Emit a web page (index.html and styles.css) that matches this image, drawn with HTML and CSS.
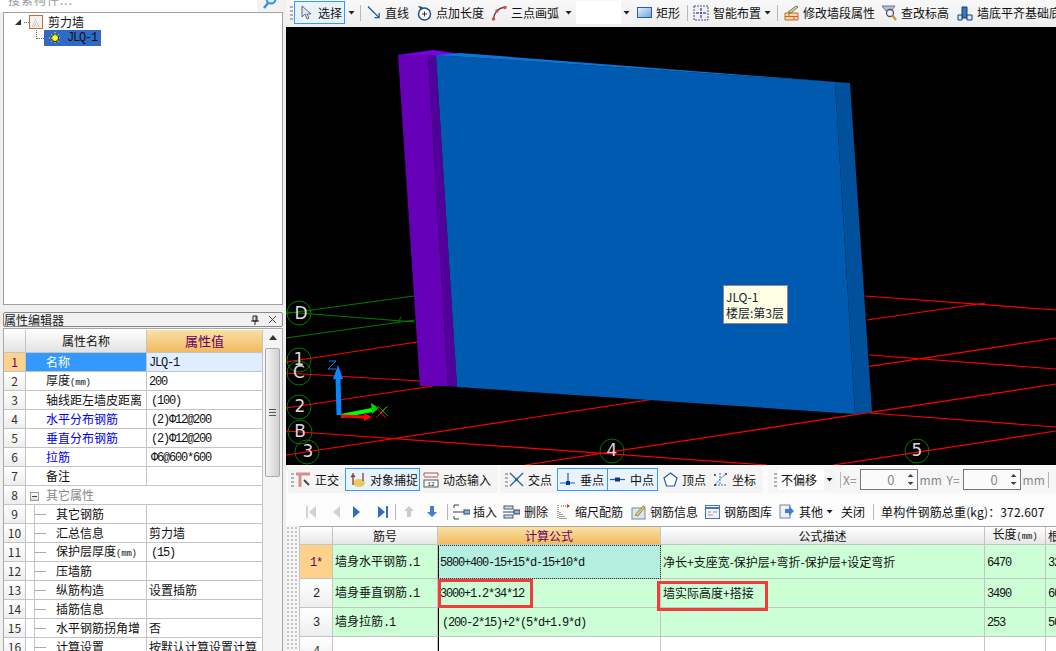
FILE: index.html
```html
<!DOCTYPE html>
<html lang="zh">
<head>
<meta charset="utf-8">
<title>剪力墙</title>
<link rel="stylesheet" href="styles.css">
</head>
<body>
<div class="app">
  <aside class="left">
    <div class="search">
      <div class="search-input">搜索构件...</div>
      <div class="search-btn"><svg width="14" height="12" viewBox="0 0 14 12"><circle cx="8" cy="-1" r="4.5" fill="#dbeeff" stroke="#3d8fd8" stroke-width="2"/><path d="M5 3 1 8" stroke="#3d8fd8" stroke-width="2.5"/></svg></div>
    </div>
    <div class="tree">
      <div class="tree-root">
        <svg class="expander" width="6" height="6" viewBox="0 0 6 6"><path d="M6 0V6H0Z" fill="#333"/></svg>
        <span class="dots-h"></span>
        <svg width="14" height="14" viewBox="0 0 14 14"><rect x=".5" y=".5" width="13" height="13" fill="#f7f0ea" stroke="#b8703c"/><path d="M3 11h8M4 9h6M5 7h4M6 5h2" stroke="#aaa" stroke-dasharray="1 1"/></svg>
        <span class="tree-label">剪力墙</span>
      </div>
      <div class="tree-child">
        <span class="dots-l"></span>
        <div class="tree-sel">
          <svg width="12" height="12" viewBox="0 0 12 12"><circle cx="6" cy="6" r="3.5" fill="#ffff20" stroke="#111"/><path d="M6 0v12M0 6h12M2 2l8 8M10 2l-8 8" stroke="#ffff20" stroke-dasharray="1 1"/></svg>
          <span class="m">JLQ-1</span>
        </div>
      </div>
    </div>
    <div class="titlebar">
      <span>属性编辑器</span>
      <span class="title-ctl">
        <svg width="8" height="10" viewBox="0 0 8 10"><path d="M2 1h4v5H2zM0 6h8M4 6v4M5 1v5" fill="none" stroke="#222"/></svg>
        <svg width="9" height="9" viewBox="0 0 9 9"><path d="M1 1l7 7M8 1 1 8" stroke="#444"/></svg>
      </span>
    </div>
    <div class="props">
      <table class="ptable">
        <colgroup><col class="pc1"><col class="pc2"><col class="pc3"></colgroup>
        <tr class="phead"><th></th><th>属性名称</th><th class="hl">属性值</th></tr>
        <tr class="cur"><td class="rn">1</td><td class="nm">名称</td><td class="v"><span class="m">JLQ-1</span></td></tr>
        <tr><td class="rn">2</td><td class="nm">厚度<span class="m sm">(mm)</span></td><td class="v"><span class="m">200</span></td></tr>
        <tr><td class="rn">3</td><td class="nm">轴线距左墙皮距离</td><td class="v in"><span class="m">(100)</span></td></tr>
        <tr><td class="rn">4</td><td class="nm link">水平分布钢筋</td><td class="v in"><span class="m">(2)Φ12@200</span></td></tr>
        <tr><td class="rn">5</td><td class="nm link">垂直分布钢筋</td><td class="v in"><span class="m">(2)Φ12@200</span></td></tr>
        <tr><td class="rn">6</td><td class="nm link">拉筋</td><td class="v in"><span class="m">Φ6@600*600</span></td></tr>
        <tr><td class="rn">7</td><td class="nm">备注</td><td class="v"></td></tr>
        <tr><td class="rn">8</td><td class="nm group" colspan="2"><span class="minus"></span>其它属性</td></tr>
        <tr><td class="rn">9</td><td class="nm sub">其它钢筋</td><td class="v"></td></tr>
        <tr><td class="rn">10</td><td class="nm sub">汇总信息</td><td class="v">剪力墙</td></tr>
        <tr><td class="rn">11</td><td class="nm sub">保护层厚度<span class="m sm">(mm)</span></td><td class="v in"><span class="m">(15)</span></td></tr>
        <tr><td class="rn">12</td><td class="nm sub">压墙筋</td><td class="v"></td></tr>
        <tr><td class="rn">13</td><td class="nm sub">纵筋构造</td><td class="v">设置插筋</td></tr>
        <tr><td class="rn">14</td><td class="nm sub">插筋信息</td><td class="v"></td></tr>
        <tr><td class="rn">15</td><td class="nm sub">水平钢筋拐角增</td><td class="v">否</td></tr>
        <tr><td class="rn">16</td><td class="nm sub">计算设置</td><td class="v">按默认计算设置计算</td></tr>
      </table>
      <div class="vscroll">
        <svg class="sb-up" width="8" height="5" viewBox="0 0 8 5"><path d="M4 0 8 5H0Z" fill="#333"/></svg>
        <div class="sb-thumb"><span class="sb-grip"></span></div>
      </div>
    </div>
  </aside>

  <main class="right">
    <div class="tb top">
      <span class="grip"></span>
      <div class="btn-on sel g3"><svg width="14" height="16" viewBox="0 0 14 16"><path d="M3 1v11l3-3 2 5 2-1-2-4h4Z" fill="#dfe8f4" stroke="#667"/></svg><span>选择</span></div>
      <span class="caret g5"></span>
      <span class="sep g6"></span>
      <div class="ti g8"><svg width="14" height="15" viewBox="0 0 15 15"><path d="M1 1 13 13M13 8v5H8" fill="none" stroke="#1d5c96" stroke-width="1.4"/></svg><span>直线</span></div>
      <div class="ti g7"><svg width="15" height="16" viewBox="0 0 15 16"><circle cx="7.5" cy="9" r="6" fill="#fff" stroke="#1f4f86" stroke-width="1.5"/><path d="M5 9h5M7.5 6.5v5" stroke="#333"/><path d="M1 1l5 1-2 3Z" fill="#1f4f86"/></svg><span>点加长度</span></div>
      <div class="ti g6"><svg width="16" height="16" viewBox="0 0 16 16"><path d="M2 15C3 8 7 3 14 2" fill="none" stroke="#345" stroke-width="1.4"/><circle cx="2.500" cy="14" r="1.800" fill="#e0503a"/><circle cx="6" cy="6" r="1.800" fill="#e0503a"/><circle cx="14" cy="2.500" r="1.800" fill="#e0503a"/></svg><span>三点画弧</span></div>
      <span class="caret g4"></span>
      <div class="blank"></div>
      <div class="blank-arrow g5"><span class="caret"></span></div>
      <div class="ti g7"><svg width="15" height="15" viewBox="0 0 15 15"><defs><linearGradient id="rg" x1="0" y1="0" x2="1" y2="1"><stop offset="0" stop-color="#eaf2fd"/><stop offset="1" stop-color="#6d9fe0"/></linearGradient></defs><rect x=".5" y="2.500" width="14" height="10" fill="url(#rg)" stroke="#2b5da8"/></svg><span>矩形</span></div>
      <span class="sep g5"></span>
      <div class="ti g3"><svg width="16" height="16" viewBox="0 0 16 16"><rect x="1" y="1" width="14" height="14" fill="#eef" stroke="#456" stroke-dasharray="2 1"/><path d="M8 3v3M8 10v3M3 8h3M10 8h3" stroke="#123"/><circle cx="8" cy="8" r="1" fill="#123"/></svg><span>智能布置</span></div>
      <span class="caret g6"></span>
      <span class="sep g6"></span>
      <div class="ti g7"><svg width="15" height="16" viewBox="0 0 15 16"><path d="M1 8h13v7H1z" fill="#f6d6a8" stroke="#c8682c"/><path d="M1 11.500h13M5 8v3.500M10 11.500V15" stroke="#c8682c"/><path d="M4 7 12 1l2 1-7 6Z" fill="#d9d2a0" stroke="#776"/></svg><span>修改墙段属性</span></div>
      <div class="ti g8"><svg width="15" height="16" viewBox="0 0 15 16"><path d="M0 1h13L9 6H4Z" fill="#aac4dc" stroke="#678"/><circle cx="8" cy="8" r="3.500" fill="#eef" stroke="#555" stroke-width="1.300"/><path d="M10.500 10.500 14 15" stroke="#c9953a" stroke-width="2.200"/></svg><span>查改标高</span></div>
      <div class="ti"><svg width="16" height="16" viewBox="0 0 16 16"><path d="M5 2h5v11H5z" fill="#3a76c0" stroke="#123a70"/><path d="M1 10h4v5H1zM10 10h5v5h-5z" fill="#dce8f8" stroke="#123a70"/></svg><span>墙底平齐基础底</span></div>
    </div>

    <div class="scene">
      <svg class="scene-svg" width="770" height="438" viewBox="286 27 770 438">
        <g fill="none" stroke="#007c00">
          <path d="M286 313.500 414 296M286 312 415 322M286 338 415 320M401 317 398 323"/>
          <circle cx="299" cy="313" r="12"/><circle cx="299" cy="360" r="12"/><circle cx="299" cy="373" r="12"/><circle cx="299" cy="407" r="12"/><circle cx="300" cy="432" r="12"/><circle cx="307" cy="452" r="12"/><circle cx="612" cy="451" r="12"/><circle cx="917" cy="451" r="12"/>
        </g>
        <g fill="none" stroke="#f00" stroke-width="1.200">
          <path d="M286 362 417 342M286 373 420 381M286 408 433 386M286 431 767 465M286 455 1056 338M525 465 1056 384M833 465 1056 431M870 413 1056 427M865 296 1056 310M867 320 985 303M869 355 1056 369"/>
        </g>
        <path d="M398 55 433 50 462 54 436 58Z" fill="#7a00e6"/>
        <path d="M398 55 428 55 448 386 420 386Z" fill="#6600b8"/>
        <path d="M428 55 436 55 457 387 448 386Z" fill="#52009c"/>
        <path d="M436 55 835 82 855 414 457 387Z" fill="#005bb0"/>
        <path d="M436 55 460 53 850 83 835 82Z" fill="#0a74d8"/>
        <path d="M835 82 850 83 872 412 855 414Z" fill="#00509c"/>
        <g class="axis-label">
          <text x="301" y="319">D</text><text x="299" y="365">1</text><text x="299" y="378">C</text><text x="300" y="412">2</text><text x="300" y="437">B</text><text x="308" y="457">3</text><text x="612" y="456">4</text><text x="917" y="456">5</text>
        </g>
        <path d="M339 415 338 378" stroke="#0a84ff" stroke-width="5"/>
        <path d="M338 365 343 379H333Z" fill="#0a84ff"/>
        <path d="M341 416 372 410" stroke="#00ff00" stroke-width="4"/>
        <path d="M379 408 371 403 372 414Z" fill="#00d000"/>
        <path d="M341 416 365 417" stroke="#f00" stroke-width="3"/>
        <path d="M372 417 364 413 364 421Z" fill="#f00"/>
        <path d="M329 361h7L328 369h8" fill="none" stroke="#0a84ff"/>
        <path d="M376 407 386 418M386 407 376 418" stroke="#f00"/>
        <path d="M378 406 388 416M388 406 380 414" stroke="#0f0" stroke-width=".6"/>
      </svg>
      <div class="tip">JLQ-1<br>楼层:第3层</div>
    </div>

    <div class="snapbar">
      <div class="sgroup g2a">
        <span class="grip"></span>
        <div class="ti g6"><svg width="16" height="16" viewBox="0 0 16 16"><path d="M1 2h14M5 2v13" stroke="#d4908a" stroke-width="3"/><path d="M9 8l5 5" stroke="#445" stroke-width="2"/></svg><span>正交</span></div>
        <div class="btn-on snapbtn g3"><svg width="16" height="16" viewBox="0 0 16 16"><ellipse cx="9" cy="11" rx="6" ry="4" fill="#e8c860"/><path d="M3 1v12M13 1v8M1 5l2-2 2 2" fill="none" stroke="#8a3a2a" stroke-width="1.300"/></svg><span>对象捕捉</span></div>
        <div class="ti"><svg width="16" height="16" viewBox="0 0 16 16"><path d="M1 1h14M1 1v3M15 1v3M1 5h14" fill="none" stroke="#a05a50"/><rect x="1" y="8" width="14" height="7" fill="#fff" stroke="#555"/><text class="ictext" x="8" y="14">12</text></svg><span>动态输入</span></div>
      </div>
      <div class="sgroup g2b">
        <span class="grip"></span>
        <div class="ti g4 cross"><svg width="15" height="15" viewBox="0 0 15 15"><path d="M1 1 14 14M14 1 1 14" stroke="#1f5fa8" stroke-width="1.300"/><circle cx="7.500" cy="7.500" r="1.300" fill="#1f5fa8"/></svg><span>交点</span></div>
        <div class="btn-on snapsm"><svg width="15" height="15" viewBox="0 0 15 15"><path d="M0 11h15M8 1v10" stroke="#1f5fa8" stroke-width="1.200"/><rect x="6" y="9" width="4" height="4" fill="#123a80"/></svg><span>垂点</span></div>
        <div class="btn-on snapsm last"><svg width="15" height="15" viewBox="0 0 15 15"><path d="M0 7.500h15" stroke="#1f5fa8" stroke-width="1.200"/><rect x="5" y="5.500" width="5" height="4" fill="#123a80"/></svg><span>中点</span></div>
        <div class="ti g7"><svg width="15" height="15" viewBox="0 0 15 15"><path d="M7.500 1 14 6l-2.500 8h-8L1 6Z" fill="#fff" stroke="#1f5fa8" stroke-width="1.200"/></svg><span>顶点</span></div>
        <div class="ti"><svg width="15" height="15" viewBox="0 0 15 15"><path d="M2 13 7 7l6-5M2 13h11M7 1v12" fill="none" stroke="#2c78c0" stroke-dasharray="2 1"/><circle cx="2" cy="3" r="1" fill="#333"/><circle cx="13" cy="2" r="1" fill="#333"/><circle cx="2" cy="13" r="1" fill="#333"/></svg><span>坐标</span></div>
      </div>
      <div class="sgroup g2c">
        <span class="grip"></span>
        <div class="combo"><span class="combo-text">不偏移</span><span class="combo-arrow"><span class="caret"></span></span></div>
        <span class="sep sep-a"></span>
        <span class="off">X=</span>
        <div class="spin"><span class="spin-val">0</span><span class="spin-btns"><i class="up"></i><i class="down"></i></span></div>
        <span class="off unit">mm</span>
        <span class="off yl">Y=</span>
        <div class="spin"><span class="spin-val">0</span><span class="spin-btns"><i class="up"></i><i class="down"></i></span></div>
        <span class="off unit">mm</span>
        <span class="sep sep-b"></span>
      </div>
    </div>

    <div class="tb rebar">
      <svg class="nav n1" width="10" height="14" viewBox="0 0 10 14"><path d="M0 1h2v12H0zM10 1v12L3 7Z" fill="#cfd3d8"/></svg>
      <svg class="nav n2" width="7" height="14" viewBox="0 0 7 14"><path d="M7 1v12L0 7Z" fill="#cfd3d8"/></svg>
      <svg class="nav n3" width="7" height="14" viewBox="0 0 7 14"><path d="M0 1v12l7-6Z" fill="#2e6fc8"/></svg>
      <svg class="nav n4" width="10" height="14" viewBox="0 0 10 14"><path d="M8 1h2v12H8zM0 1v12l7-6Z" fill="#2e6fc8"/></svg>
      <span class="sep n5"></span>
      <svg class="nav n6" width="10" height="11" viewBox="0 0 10 11"><path d="M5 0l5 5H7v6H3V5H0Z" fill="#c8ccd0"/></svg>
      <svg class="nav n7" width="10" height="11" viewBox="0 0 10 11"><path d="M5 11 0 6h3V0h4v6h3Z" fill="#3f7ed0"/></svg>
      <span class="sep n8"></span>
      <div class="ti g6 wide"><svg width="17" height="16" viewBox="0 0 17 16"><path d="M1 1h5M1 1v3M1 15h5M1 15v-3M0 8h12" fill="none" stroke="#345"/><rect x="11" y="6" width="6" height="4" fill="#8ab0e0" stroke="#345"/></svg><span>插入</span></div>
      <div class="ti g9"><svg width="17" height="16" viewBox="0 0 17 16"><rect x="1" y="2" width="9" height="3" fill="#cfe0f5" stroke="#456"/><rect x="1" y="11" width="9" height="3" fill="#cfe0f5" stroke="#456"/><path d="M0 8h12" stroke="#345"/><rect x="11" y="6" width="6" height="4" fill="#8ab0e0" stroke="#345"/></svg><span>删除</span></div>
      <div class="ti g8"><svg width="14" height="16" viewBox="0 0 14 16"><path d="M1 1v14M3 15V8M5 15v-5M7 15v-3M9 15v-2M4 2h8" fill="none" stroke="#444" stroke-dasharray="1 1"/><path d="M10 0l3 2-3 2Z" fill="#c33"/></svg><span>缩尺配筋</span></div>
      <div class="ti g7"><svg width="15" height="16" viewBox="0 0 15 16"><rect x="1" y="4" width="13" height="11" fill="#dce6f2" stroke="#789"/><path d="M4 11 12 2l2 1-7 9Z" fill="#e8c860" stroke="#886"/></svg><span>钢筋信息</span></div>
      <div class="ti g7"><svg width="15" height="14" viewBox="0 0 15 14"><rect x=".5" y=".5" width="14" height="13" fill="#f0f4fa" stroke="#4a78b0"/><path d="M1 3h13" stroke="#4a78b0" stroke-width="2"/><path d="M3 7h3M3 10h5M8 7h4" stroke="#b86"/></svg><span>钢筋图库</span></div>
      <div class="ti g3 other"><svg width="15" height="15" viewBox="0 0 15 15"><rect x="1" y="1" width="10" height="13" fill="#eef2f8" stroke="#789"/><path d="M6 5h4V2l5 5-5 5V9H6Z" fill="#3f7ed0"/></svg><span>其他</span></div>
      <span class="caret g8"></span>
      <span class="plain">关闭</span>
      <span class="sep n9"></span>
      <span class="plain sum">单构件钢筋总重(kg)：372.607</span>
    </div>

    <div class="gridwrap">
      <div class="dotstrip">
        <svg class="corner" width="10" height="10" viewBox="0 0 10 10"><rect x=".5" y=".5" width="9" height="9" fill="#eee" stroke="#444"/><path d="M1 1l8 8M9 1 1 9" stroke="#b33"/></svg>
      </div>
      <table class="gtable">
        <colgroup><col class="gc1"><col class="gc2"><col class="gc3"><col class="gc4"><col class="gc5"><col class="gc6"></colgroup>
        <tr class="ghead"><th></th><th>筋号</th><th class="hl">计算公式</th><th>公式描述</th><th>长度<span class="m sm">(mm)</span></th><th class="cut">根数</th></tr>
        <tr class="r1 green"><td class="rn now"><span class="m">1*</span></td><td>墙身水平钢筋<span class="m">.1</span></td><td class="f active"><span class="m">5800+400-15+15*d-15+10*d</span></td><td>净长+支座宽-保护层+弯折-保护层+设定弯折</td><td><span class="m">6470</span></td><td><span class="m">32</span></td></tr>
        <tr class="r2 green"><td class="rn"><span class="m">2</span></td><td>墙身垂直钢筋<span class="m">.1</span></td><td class="f"><span class="m">3000+1.2*34*12</span><span class="mark mark-a"></span></td><td class="d">墙实际高度+搭接<span class="mark mark-b"></span></td><td><span class="m">3490</span></td><td><span class="m">60</span></td></tr>
        <tr class="r2 green"><td class="rn"><span class="m">3</span></td><td>墙身拉筋<span class="m">.1</span></td><td class="f"><span class="m pad">(200-2*15)+2*(5*d+1.9*d)</span></td><td></td><td><span class="m">253</span></td><td><span class="m">50</span></td></tr>
        <tr class="r2"><td class="rn"><span class="m">4</span></td><td></td><td class="f"></td><td></td><td></td><td></td></tr>
      </table>
    </div>
  </main>
</div>
</body>
</html>
```
FILE: styles.css
```css
* { box-sizing: border-box; }
html, body { margin: 0; padding: 0; height: 100%; overflow: hidden; background: #f0f0f0; }
body { font: 12px/16px "Noto Sans CJK SC", "Liberation Sans", sans-serif; color: #111; }
svg { flex: none; display: block; }

.app { display: grid; grid-template-columns: 286px 770px; width: 1056px; height: 651px; overflow: hidden; }
.left { display: flex; flex-direction: column; height: 651px; overflow: hidden; padding-right: 3px; }
.right { display: flex; flex-direction: column; height: 651px; overflow: hidden; background: #fbfbfb; }

.m { font: 12px/14px "Liberation Mono", "DejaVu Sans Mono", monospace; letter-spacing: -1.2px; }
.sm { font-size: 9px; letter-spacing: -0.2px; }

/* left: search + tree */
.search { display: flex; height: 12px; flex: none; overflow: hidden; }
.search-input { width: 257px; margin-left: 0; background: #fff; color: #999; line-height: 0; padding: 0 0 0 8px; letter-spacing: 1px; overflow: hidden; }
.search-btn { width: 26px; display: flex; justify-content: center; background: #f3f3f3; overflow: hidden; }
.tree { height: 293px; flex: none; margin-left: 3px; background: #fff; border: 1px solid #a0a0a0; padding-top: 1px; }
.tree-root { display: flex; align-items: center; height: 16px; padding-left: 11px; }
.expander { margin-right: 3px; }
.dots-h { width: 5px; border-top: 1px dotted #666; margin-right: 0; }
.tree-label { margin-left: 5px; font-size: 12px; }
.tree-child { display: flex; height: 16px; padding-left: 32px; }
.dots-l { width: 8px; height: 9px; border-left: 1px dotted #666; border-bottom: 1px dotted #666; }
.tree-sel { display: flex; align-items: center; width: 57px; height: 16px; padding-left: 5px; gap: 6px; background: #316ac5; color: #111; }

.titlebar { display: flex; justify-content: space-between; align-items: center; flex: none; height: 15px; margin: 7px 0 1px 3px; border: 1px solid #8a8a8a; border-radius: 2px; background: #f1f1f1; line-height: 13px; padding-right: 5px; color: #222; }
.title-ctl { display: flex; align-items: center; gap: 9px; }

.props { display: flex; flex: 1; margin-left: 3px; border: 1px solid #a8a8a8; border-bottom: 0; min-height: 0; overflow: hidden; background: #fff; padding-top: 1px; }
.ptable { table-layout: fixed; width: 259px; flex: none; border-collapse: separate; border-spacing: 0; align-self: flex-start; }
.pc1 { width: 22px; } .pc2 { width: 121px; } .pc3 { width: 116px; }
.ptable th, .ptable td { padding: 0; height: 19px; line-height: 14px; white-space: nowrap; overflow: hidden; border-right: 1px solid #c4c4c4; border-bottom: 1px solid #c4c4c4; font-weight: 400; }
.phead th { height: 23px; background: linear-gradient(#fff, #e2e2e2); font-size: 12px; }
.phead th.hl, .ghead th.hl { background: linear-gradient(#fbe0a6, #f0bb60); color: #660066; }
.phead th.hl { font-size: 13px; }
.rn { text-align: center; background: linear-gradient(#fff, #eee); color: #333; }
.nm { padding-left: 20px !important; }
.v { padding-left: 2px !important; }
.v.in { padding-left: 4px !important; }
.link { color: #0000f0; }
.cur .rn { background: #ffd28c; color: #660066; }
.cur .nm { background: #3399ff; color: #fff; }
.cur .v { background: #deeeff; }
.group { color: #888; padding-left: 4px !important; }
.minus { display: inline-block; width: 9px; height: 9px; margin-right: 7px; border: 1px solid #999; background: linear-gradient(#444, #444) center / 5px 1px no-repeat, linear-gradient(#fff, #ddd); vertical-align: -1px; }
.sub { position: relative; padding-left: 30px !important; }
.sub::before { content: ""; position: absolute; left: 8px; top: 9px; width: 12px; border-top: 1px solid #aaa; }
.sub::after { content: ""; position: absolute; left: 8px; top: 0; height: 100%; border-left: 1px solid #c4c4c4; }

.vscroll { width: 19px; flex: none; margin-left: 0; padding-top: 5px; background: #f4f4f4; display: flex; flex-direction: column; align-items: center; }
.sb-up { margin-bottom: 8px; }
.sb-thumb { display: flex; align-items: center; justify-content: center; width: 15px; height: 129px; border: 1px solid #aaa; border-radius: 2px; background: linear-gradient(90deg, #f4f4f4, #d0d0d0); }
.sb-grip { width: 7px; height: 7px; background: repeating-linear-gradient(#555 0 1px, transparent 1px 3px); }

/* toolbars */
.tb { display: flex; align-items: center; flex: none; white-space: nowrap; overflow: hidden; }
.top { height: 27px; padding: 0 0 2px 4px; background: linear-gradient(#f8f8f8, #eeeeee); border-bottom: 0; }
.grip { flex: none; width: 3px; height: 14px; margin-right: 1px; background: repeating-linear-gradient(#b0b0b0 0 2px, transparent 2px 4px); }
.ti { display: flex; align-items: center; gap: 4px; flex: none; }
.btn-on { display: flex; align-items: center; flex: none; border: 1px solid #3399ff; background: #e8f3fd; }
.sel { width: 51px; height: 23px; padding-left: 4px; gap: 5px; }
.caret { flex: none; display: block; width: 7px; height: 4px; background: #222; clip-path: polygon(0 0, 100% 0, 50% 100%); }
.sep { flex: none; width: 1px; height: 16px; background: #b8b8b8; }
.g2 { margin-right: 2px; } .g3 { margin-right: 3px; } .g4 { margin-right: 4px; } .g5 { margin-right: 5px; } .g6 { margin-right: 6px; } .g7 { margin-right: 7px; } .g8 { margin-right: 8px; } .g9 { margin-right: 9px; }
.blank { width: 45px; height: 23px; background: #fff; flex: none; }
.blank-arrow { display: flex; align-items: center; justify-content: center; width: 11px; height: 23px; background: #f4f4f4; flex: none; }

.scene { position: relative; flex: none; height: 438px; background: #000; overflow: hidden; }
.axis-label text { font: 17px "DejaVu Sans", sans-serif; fill: #d8d8d8; text-anchor: middle; }
.tip { position: absolute; left: 437px; top: 258px; width: 65px; height: 39px; padding: 3px 2px; border: 1px solid #8a8a8a; background: #ffffe6; color: #123; line-height: 16px; white-space: nowrap; font-family: "Noto Sans CJK SC", sans-serif; }

.snapbar { display: flex; align-items: center; flex: none; height: 32px; padding: 0 0 3px 2px; gap: 2px; background: #fcfcfc; }
.sgroup { display: flex; align-items: center; flex: none; height: 27px; background: #f4f4f4; border-radius: 3px; padding-left: 3px; }
.g2a { width: 210px; } .g2b { width: 263px; margin-right: 3px; padding-left: 5px; } .g2c { width: 292px; background: #f6f6f6; padding-left: 6px; }
.snapbtn { width: 75px; height: 23px; padding-left: 4px; gap: 4px; margin-left: 0; }
.snapsm { width: 51px; height: 23px; padding-left: 2px; gap: 5px; margin-right: -1px; }
.snapsm.last { margin-right: 5px; }
.cross { margin-right: 5px; }
.combo { display: flex; align-items: center; width: 57px; height: 21px; padding-left: 3px; background: #fff; flex: none; }
.combo-text { width: 43px; }
.combo-arrow { display: flex; align-items: center; justify-content: center; width: 11px; height: 21px; background: #f4f4f4; }
.sep-a { margin: 0 2px 0 5px; }
.off { flex: none; color: #888; }
.unit { margin-left: 2px; width: 22px; }
.yl { margin-left: 5px; margin-right: 3px; }
.spin { display: flex; align-items: center; flex: none; width: 58px; height: 21px; margin-left: 3px; border: 1px solid #777; background: #fbfbfb; color: #888; }
.yl + .spin { margin-left: 0; }
.spin-val { flex: 1; text-align: right; padding-right: 10px; font-size: 13px; }
.spin-btns { display: flex; flex-direction: column; gap: 5px; width: 12px; align-items: center; }
.spin-btns i { display: block; width: 6px; height: 3px; background: #444; }
.spin-btns .up { clip-path: polygon(50% 0, 100% 100%, 0 100%); }
.spin-btns .down { clip-path: polygon(0 0, 100% 0, 50% 100%); }
.sep-b { margin-left: 3px; }

.rebar { height: 29px; padding: 0 0 0 20px; background: #fcfcfc; }
.nav { flex: none; }
.n1 { margin-right: 17px; } .n2 { margin-right: 13px; } .n3 { margin-right: 18px; } .n4 { margin-right: 7px; }
.n5 { margin-right: 8px; } .n6 { margin-right: 13px; } .n7 { margin-right: 10px; } .n8 { margin-right: 5px; }
.wide { gap: 3px; }
.other { gap: 5px; margin-left: 0; }
.n9 { margin: 0 7px 0 8px; }
.plain { flex: none; }
.sum { letter-spacing: .15px; }

/* rebar grid */
.gridwrap { display: flex; flex: 1; min-height: 0; overflow: hidden; }
.dotstrip { position: relative; width: 13px; flex: none; background-color: #f6f6f6; background-image: radial-gradient(#c4c4c4 1px, transparent 1.200px); background-size: 4px 4px; }
.corner { position: absolute; left: 1px; top: -27px; }
.gtable { table-layout: fixed; width: 806px; flex: none; border-collapse: separate; border-spacing: 0; align-self: flex-start; border-top: 1px solid #a8a8a8; border-left: 1px solid #c4c4c4; background: #fff; }
.gc1 { width: 33px; } .gc2 { width: 105px; } .gc3 { width: 223px; } .gc4 { width: 324px; } .gc5 { width: 61px; } .gc6 { width: 60px; }
.gtable th, .gtable td { padding: 0; line-height: 14px; white-space: nowrap; overflow: hidden; border-right: 1px solid #c4c4c4; border-bottom: 1px solid #c4c4c4; font-weight: 400; }
.gtable td { padding-left: 2px; }
.gtable td.rn { padding-left: 0; }
.ghead th { height: 18px; background: linear-gradient(#fff, #e6e6e6); }
.ghead th.cut { text-align: left; padding-left: 2px; }
.r1 td { height: 34px; }
.r2 td { height: 29px; }
.green td { background: #ccffd6; }
.gtable .green td.rn { background: linear-gradient(#fff, #eee); color: #222; }
.gtable .green td.now { background: #ffd28c; color: #660066; }
.gtable td.f { position: relative; overflow: visible; border-left: 1px solid #000; padding-left: 1px; }
.gtable .green td.active { background: #b5f0df; outline: 1px dotted #333; outline-offset: -1px; }
.gtable td.d { position: relative; overflow: visible; }
.pad { padding-left: 2px; }
.mark { position: absolute; border: 3px solid #f03c3c; pointer-events: none; z-index: 2; }
.mark-a { left: -1px; top: 0; width: 95px; height: 29px; }
.mark-b { left: -4px; top: 2px; width: 111px; height: 30px; }

.ictext { font: 6px "Liberation Mono", monospace; text-anchor: middle; fill: #111; }
```
